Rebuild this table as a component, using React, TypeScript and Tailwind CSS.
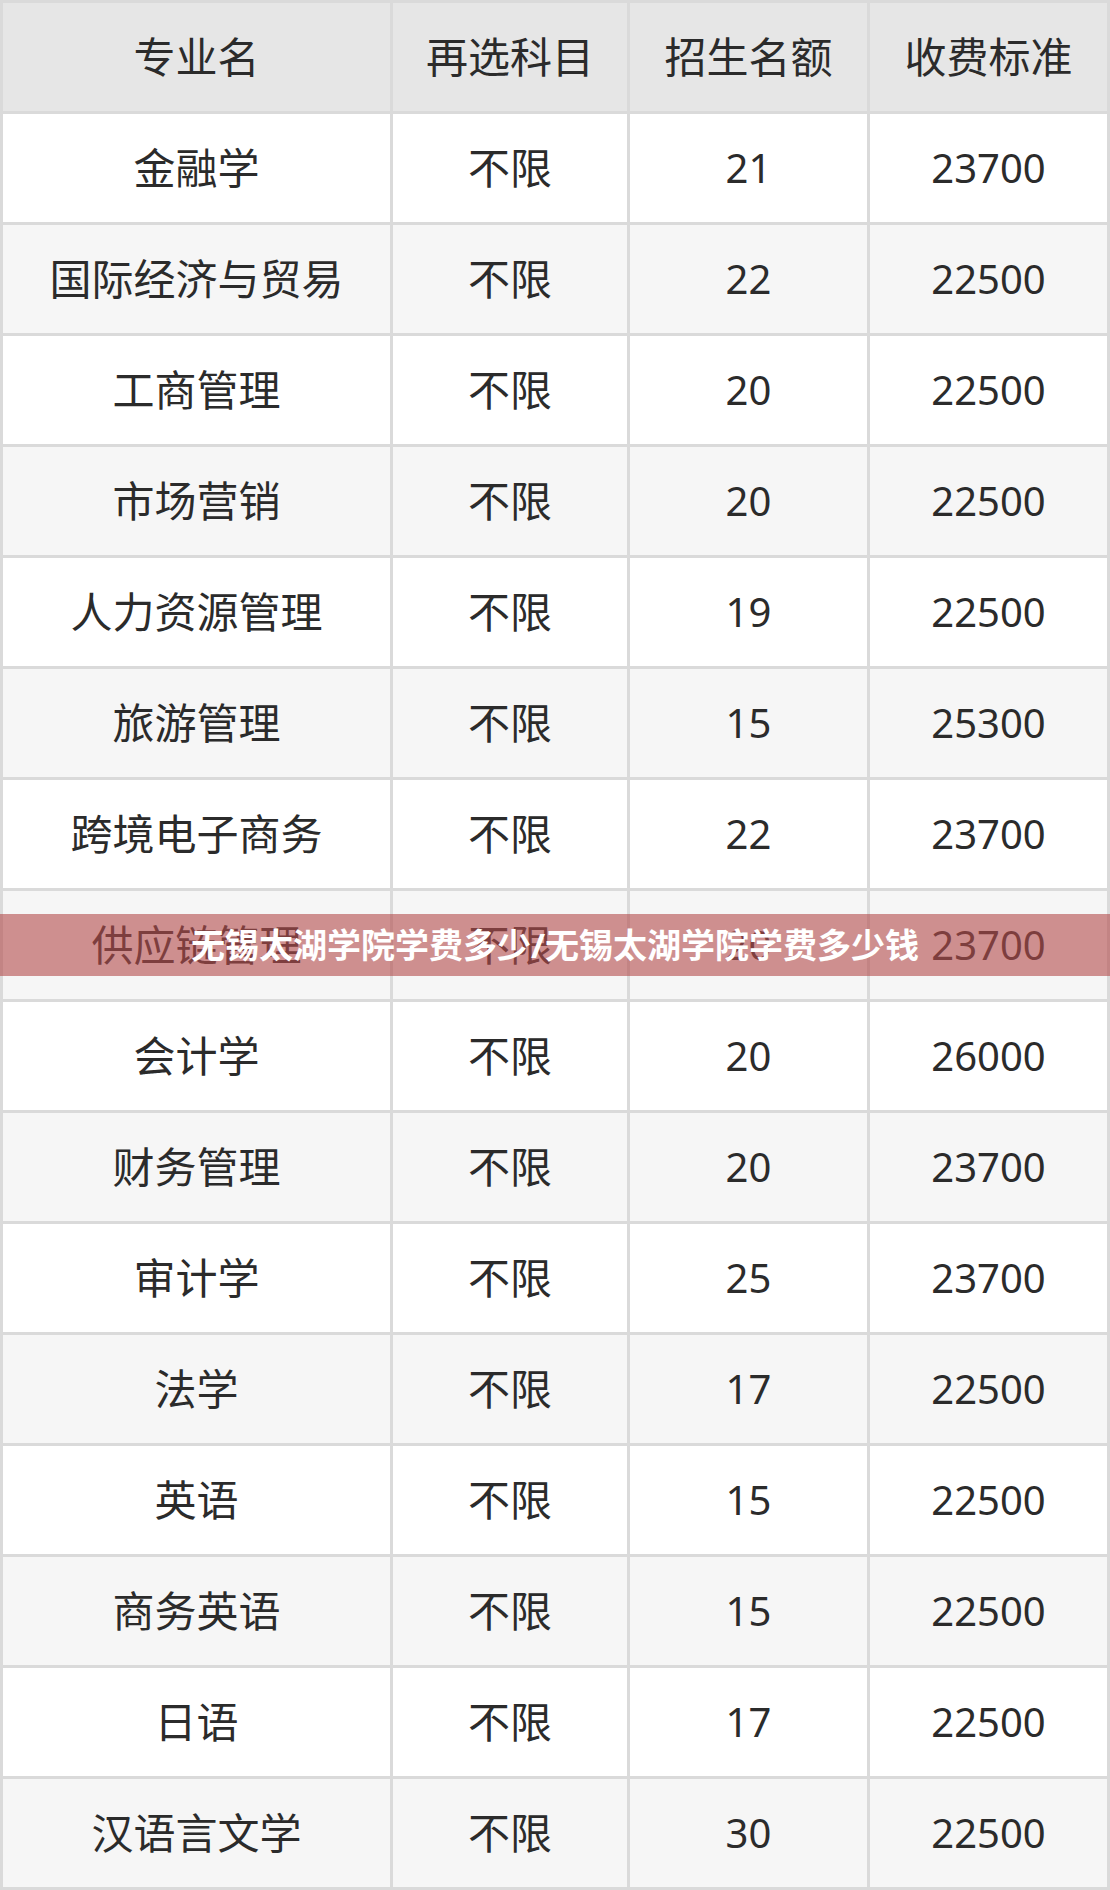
import React from 'react';

interface MajorRow {
  name: string;
  subject: string;
  quota: string;
  fee: string;
}

const rows: MajorRow[] = [
  { name: '金融学', subject: '不限', quota: '21', fee: '23700' },
  { name: '国际经济与贸易', subject: '不限', quota: '22', fee: '22500' },
  { name: '工商管理', subject: '不限', quota: '20', fee: '22500' },
  { name: '市场营销', subject: '不限', quota: '20', fee: '22500' },
  { name: '人力资源管理', subject: '不限', quota: '19', fee: '22500' },
  { name: '旅游管理', subject: '不限', quota: '15', fee: '25300' },
  { name: '跨境电子商务', subject: '不限', quota: '22', fee: '23700' },
  { name: '供应链管理', subject: '不限', quota: '20', fee: '23700' },
  { name: '会计学', subject: '不限', quota: '20', fee: '26000' },
  { name: '财务管理', subject: '不限', quota: '20', fee: '23700' },
  { name: '审计学', subject: '不限', quota: '25', fee: '23700' },
  { name: '法学', subject: '不限', quota: '17', fee: '22500' },
  { name: '英语', subject: '不限', quota: '15', fee: '22500' },
  { name: '商务英语', subject: '不限', quota: '15', fee: '22500' },
  { name: '日语', subject: '不限', quota: '17', fee: '22500' },
  { name: '汉语言文学', subject: '不限', quota: '30', fee: '22500' },
];

const headers = ['专业名', '再选科目', '招生名额', '收费标准'];

export default function App() {
  return (
    <div
      className="relative w-[1110px] h-[1890px] bg-white text-[#2b2b2b]"
      style={{ fontFamily: '"Noto Sans", "Noto Sans CJK SC", sans-serif' }}
    >
      <div className="grid grid-cols-[387px_234px_237px_237px] auto-rows-[108px] gap-[3px] p-[3px] bg-[#dadada] h-full">
        {headers.map((h) => (
          <div key={h} className="flex items-center justify-center bg-[#e6e6e6] text-[42px] leading-none">
            {h}
          </div>
        ))}
        {rows.map((row, i) => {
          const bg = i % 2 === 0 ? 'bg-white' : 'bg-[#f6f6f6]';
          return (
            <React.Fragment key={row.name}>
              <div className={`flex items-center justify-center ${bg} text-[42px] leading-none`}>{row.name}</div>
              <div className={`flex items-center justify-center ${bg} text-[42px] leading-none`}>{row.subject}</div>
              <div className={`flex items-center justify-center ${bg} text-[40px] leading-none`}>{row.quota}</div>
              <div className={`flex items-center justify-center ${bg} text-[40px] leading-none`}>{row.fee}</div>
            </React.Fragment>
          );
        })}
      </div>

      <div className="absolute left-0 right-0 top-[914px] h-[62px] flex items-center justify-center bg-[rgba(180,75,75,0.6)]">
        <span className="text-white font-bold text-[34px] leading-none">
          无锡太湖学院学费多少/无锡太湖学院学费多少钱
        </span>
      </div>
    </div>
  );
}
